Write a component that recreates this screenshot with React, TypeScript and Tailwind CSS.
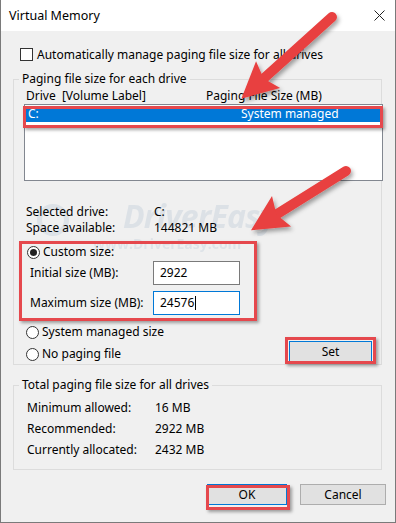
import React from "react";

const font = { fontFamily: '"Noto Sans", "Segoe UI", Arial, sans-serif' };

function Radio({ checked }: { checked?: boolean }) {
  return (
    <span className="w-[13px] h-[13px] rounded-full border border-[#333] bg-white flex items-center justify-center shrink-0">
      {checked && <span className="w-[7px] h-[7px] rounded-full bg-[#222]" />}
    </span>
  );
}

function Arrow({ x, y, angle, len }: { x: number; y: number; angle: number; len: number }) {
  return (
    <g transform={`translate(${x} ${y}) rotate(${angle})`}>
      <line x1={0} y1={0} x2={len - 28} y2={0} stroke="#e8403f" strokeWidth={10} strokeLinecap="round" />
      <polygon points={`${len},0 ${len - 36},-18 ${len - 30},0 ${len - 36},18`} fill="#e8403f" />
    </g>
  );
}

export default function App() {
  return (
    <div
      className="relative w-[396px] h-[523px] bg-[#f0f0f0] border-l border-r border-b border-[#7a7a7a] text-[12px] text-black leading-[16px] overflow-hidden"
      style={font}
    >
      {/* Title bar */}
      <div className="h-[31px] bg-white flex items-center justify-between pl-[8px] pr-[9px]">
        <span className="text-[12.5px]">Virtual Memory</span>
        <svg width="11" height="11" viewBox="0 0 11 11" className="mr-[1px]">
          <path d="M0.5 0.5 L10.5 10.5 M10.5 0.5 L0.5 10.5" stroke="#222" strokeWidth="1" />
        </svg>
      </div>

      {/* Watermark */}
      <span className="absolute left-[36px] top-[204px] w-[32px] h-[32px] rounded-full border-[5px] border-[#c9d3dd] opacity-50 pointer-events-none" />
      <div className="absolute left-[122px] top-[198px] text-[32px] leading-[36px] italic font-bold tracking-tight text-[#c9d3dd] opacity-50 pointer-events-none" style={{ fontFamily: '"Open Sans", sans-serif' }}>
        DriverEasy
      </div>
      <div className="absolute left-[92px] top-[236px] text-[14px] leading-[16px] font-bold text-[#d3dbe3] opacity-60 pointer-events-none" style={{ fontFamily: '"Open Sans", sans-serif' }}>
        www.DriverEasy.com
      </div>

      <div className="pl-[12px] pr-[13px] relative">
        {/* Checkbox row */}
        <div className="mt-[17px] h-[13px] flex items-center pl-[7px] gap-[4px]">
          <span className="w-[13px] h-[13px] border border-[#333] bg-white shrink-0" />
          <span>Automatically manage paging file size for all drives</span>
        </div>

        {/* Group 1 */}
        <fieldset className="mt-[10px] border border-[#dcdcdc] p-0">
          <legend className="ml-[5px] px-[3px] h-[16px]">Paging file size for each drive</legend>
          <div className="pl-[10px] pb-[2px]">
            <div className="mt-[1px] h-[16px] flex">
              <span className="w-[182px] pl-[2px]">Drive&nbsp; [Volume Label]</span>
              <span>Paging File Size (MB)</span>
            </div>
            <div className="mt-0 h-[77px] mr-[-2px] border border-[#828790] bg-white p-[1px]">
              <div className="h-[16px] bg-[#0078d7] text-white flex">
                <span className="w-[215px] pl-[2px]">C:</span>
                <span>System managed</span>
              </div>
            </div>

            <div className="mt-[23px] h-[16px] flex pl-[2px] relative">
              <span className="w-[128px]">Selected drive:</span>
              <span>C:</span>
            </div>
            <div className="h-[16px] flex pl-[2px] relative">
              <span className="w-[128px]">Space available:</span>
              <span>144821 MB</span>
            </div>

            <div className="mt-[8px] h-[16px] flex items-center pl-[3px] gap-[3px]">
              <Radio checked />
              <span>Custom size:</span>
            </div>
            <div className="mt-[1px] h-[24px] flex items-center pl-[6px]">
              <span className="w-[123px]">Initial size (MB):</span>
              <div className="w-[87px] h-[24px] border border-[#7a7a7a] bg-white flex items-center pl-[6px]">2922</div>
            </div>
            <div className="mt-[6px] h-[24px] flex items-center pl-[6px]">
              <span className="w-[123px]">Maximum size (MB):</span>
              <div className="w-[87px] h-[24px] border border-[#0078d7] bg-white flex items-center pl-[6px]">
                24576<span className="inline-block w-[1px] h-[14px] bg-black ml-[1px]" />
              </div>
            </div>

            <div className="flex items-end">
              <div className="flex flex-col">
                <div className="mt-[9px] h-[16px] flex items-center pl-[2px] gap-[3px]">
                  <Radio />
                  <span>System managed size</span>
                </div>
                <div className="mt-[6px] h-[16px] flex items-center pl-[2px] gap-[3px]">
                  <Radio />
                  <span>No paging file</span>
                </div>
              </div>
              <button className="ml-auto mr-[9px] w-[83px] h-[21px] bg-[#e1e1e1] border border-[#0078d7] flex items-center justify-center">
                Set
              </button>
            </div>
          </div>
        </fieldset>

        {/* Group 2 */}
        <fieldset className="mt-[12px] border border-[#dcdcdc] p-0">
          <legend className="ml-[5px] px-[3px] h-[16px]">Total paging file size for all drives</legend>
          <div className="pl-[13px] pb-[11px]">
            <div className="mt-[7px] h-[16px] flex">
              <span className="w-[128px]">Minimum allowed:</span>
              <span>16 MB</span>
            </div>
            <div className="mt-[5px] h-[16px] flex">
              <span className="w-[128px]">Recommended:</span>
              <span>2922 MB</span>
            </div>
            <div className="mt-[5px] h-[16px] flex">
              <span className="w-[128px]">Currently allocated:</span>
              <span>2432 MB</span>
            </div>
          </div>
        </fieldset>

        {/* Buttons */}
        <div className="mt-[14px] flex justify-end gap-[13px] mr-[-4px]">
          <button className="w-[80px] h-[21px] bg-[#e1e1e1] border border-[#0078d7] flex items-center justify-center">OK</button>
          <button className="w-[86px] h-[21px] bg-[#e1e1e1] border border-[#adadad] flex items-center justify-center">Cancel</button>
        </div>
      </div>

      {/* Red annotation boxes */}
      <div className="absolute left-[22px] top-[106px] w-[360px] h-[22px] border-[3px] border-[#e5484d] shadow-[2px_2px_3px_rgba(0,0,0,0.35)]" />
      <div className="absolute left-[18px] top-[241px] w-[238px] h-[80px] border-[3px] border-[#e5484d] shadow-[2px_2px_3px_rgba(0,0,0,0.35)]" />
      <div className="absolute left-[284px] top-[337px] w-[91px] h-[27px] border-[3px] border-[#e5484d] shadow-[2px_2px_3px_rgba(0,0,0,0.35)]" />
      <div className="absolute left-[205px] top-[485px] w-[84px] h-[25px] border-[3px] border-[#e5484d] shadow-[2px_2px_3px_rgba(0,0,0,0.35)]" />

      {/* Arrows */}
      <svg className="absolute left-0 top-0 pointer-events-none" width="396" height="523" viewBox="0 0 396 523">
        <defs>
          <filter id="sh" x="-20%" y="-20%" width="140%" height="140%">
            <feDropShadow dx="2" dy="3" stdDeviation="2" floodColor="#000" floodOpacity="0.35" />
          </filter>
        </defs>
        <g filter="url(#sh)">
          <Arrow x={331} y={17} angle={138} len={122} />
          <Arrow x={345} y={171} angle={148} len={112} />
        </g>
      </svg>
    </div>
  );
}
